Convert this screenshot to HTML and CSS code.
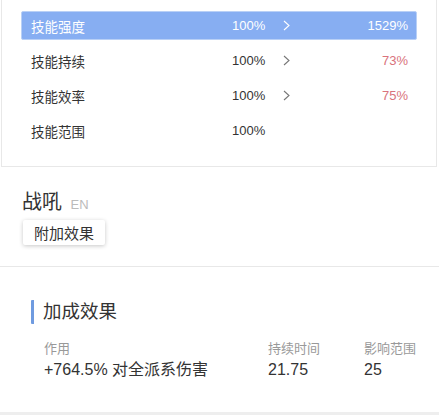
FILE: index.html
```html
<!DOCTYPE html>
<html lang="zh-CN">
<head>
  <meta charset="UTF-8">
  <meta name="viewport" content="width=device-width, initial-scale=1.0">
  <title>战吼</title>
  <link rel="stylesheet" href="styles.css">
</head>
<body>
  <div class="stats">
    <div class="stat-row active">
      <span class="stat-name">技能强度</span>
      <span class="stat-base">100%</span>
      <svg class="stat-arrow" width="7" height="11" viewBox="0 0 7 11"><polyline points="1,1 6,5.5 1,10" fill="none" stroke="currentColor" stroke-width="1.1"/></svg>
      <span class="stat-value">1529%</span>
    </div>
    <div class="stat-row">
      <span class="stat-name">技能持续</span>
      <span class="stat-base">100%</span>
      <svg class="stat-arrow" width="7" height="11" viewBox="0 0 7 11"><polyline points="1,1 6,5.5 1,10" fill="none" stroke="currentColor" stroke-width="1.1"/></svg>
      <span class="stat-value down">73%</span>
    </div>
    <div class="stat-row">
      <span class="stat-name">技能效率</span>
      <span class="stat-base">100%</span>
      <svg class="stat-arrow" width="7" height="11" viewBox="0 0 7 11"><polyline points="1,1 6,5.5 1,10" fill="none" stroke="currentColor" stroke-width="1.1"/></svg>
      <span class="stat-value down">75%</span>
    </div>
    <div class="stat-row">
      <span class="stat-name">技能范围</span>
      <span class="stat-base">100%</span>
    </div>
  </div>

  <div class="skill">
    <div class="skill-title">战吼 <span class="lang">EN</span></div>
    <button class="tag-button">附加效果</button>
  </div>

  <div class="bonus">
    <h2 class="bonus-title">加成效果</h2>
    <div class="bonus-grid">
      <div class="bonus-col">
        <div class="bonus-label">作用</div>
        <div class="bonus-value">+764.5% 对全派系伤害</div>
      </div>
      <div class="bonus-col">
        <div class="bonus-label">持续时间</div>
        <div class="bonus-value">21.75</div>
      </div>
      <div class="bonus-col">
        <div class="bonus-label">影响范围</div>
        <div class="bonus-value">25</div>
      </div>
    </div>
  </div>
</body>
</html>
```

FILE: styles.css
```css
body {
  font-family: "Liberation Sans", "Noto Sans CJK SC", sans-serif;
  margin: 0;
  padding: 0;
  background: #fff;
  color: #333;
  width: 439px;
  height: 419px;
  overflow: hidden;
}
.stats {
  height: 167px;
  box-sizing: border-box;
  margin: 0 2px 0 1px;
  padding: 11px 19px 0 19px;
  border: 1px solid #e8e8e8;
  border-top: none;
}
.stat-row {
  display: grid;
  grid-template-columns: 201px 51px 14px 1fr;
  align-items: center;
  height: 29px;
  margin-bottom: 6px;
  padding: 0 8px 0 9px;
  font-size: 13.5px;
  border: 1px solid transparent;
  border-radius: 2px;
  box-sizing: border-box;
}
.stat-row.active {
  background: #87aef2;
  border-color: #b9d0f6;
  color: #fff;
}
.stat-base {
  font-size: 13px;
}
.stat-arrow {
  color: #777;
  display: block;
}
.stat-row.active .stat-arrow {
  color: #fff;
}
.stat-value {
  text-align: right;
  font-size: 13px;
}
.stat-value.down {
  color: #d9737c;
}
.skill {
  height: 100px;
  box-sizing: border-box;
  padding: 22px 22px 0;
  border-bottom: 1px solid #e8e8e8;
}
.skill-title {
  font-size: 20px;
  line-height: 26px;
  color: #333;
}
.lang {
  font-size: 13px;
  color: #bbb;
  margin-left: 3px;
}
.tag-button {
  margin: 2px 0 0 1px;
  padding: 0 11px;
  height: 25px;
  border: none;
  background: #fff;
  font-family: inherit;
  font-size: 15px;
  color: #333;
  box-shadow: 0 1px 4px rgba(0, 0, 0, 0.22);
  border-radius: 2px;
}
.bonus {
  height: 148px;
  box-sizing: border-box;
  padding: 33px 20px 0 31px;
  border-bottom: 3px solid #eee;
}
.bonus-title {
  margin: 0;
  font-size: 18.5px;
  font-weight: normal;
  line-height: 24px;
  color: #333;
  padding-left: 9px;
  border-left: 3px solid #6f9be0;
  border-radius: 1px;
}
.bonus-grid {
  display: grid;
  grid-template-columns: 224px 96px 1fr;
  margin-top: 16px;
  padding-left: 13px;
}
.bonus-label {
  font-size: 13px;
  color: #999;
  line-height: 18px;
}
.bonus-value {
  font-size: 16px;
  line-height: 24px;
  color: #333;
}
```
